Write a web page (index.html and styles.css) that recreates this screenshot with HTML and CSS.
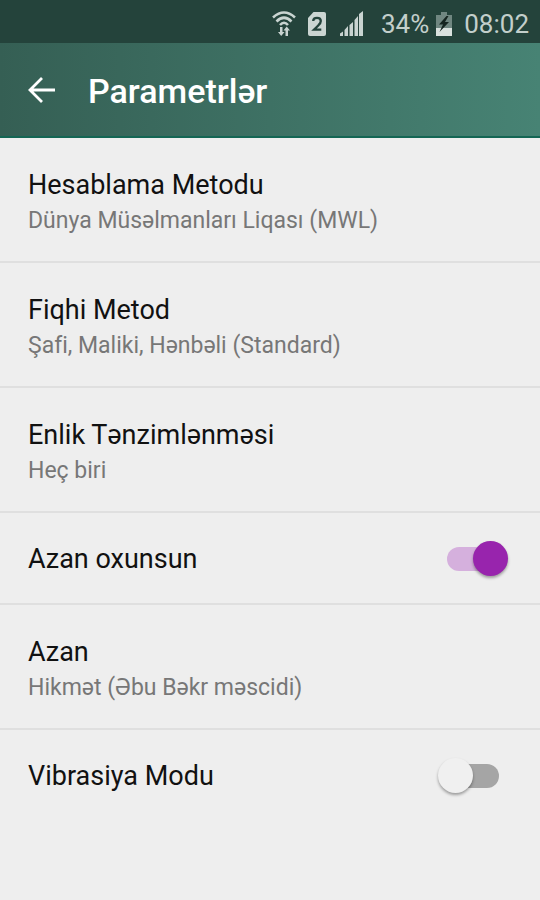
FILE: index.html
```html
<!DOCTYPE html>
<html lang="az">
<head>
<meta charset="utf-8">
<meta name="viewport" content="width=device-width, initial-scale=1">
<title>Parametrlər</title>
<link rel="stylesheet" href="styles.css">
</head>
<body>
<div class="status">
  <svg class="wifi" width="24" height="28" viewBox="0 0 24 28" aria-hidden="true">
    <g fill="none" stroke="#c9d4d1" stroke-width="2.600">
      <path d="M1 7.500Q12-2.500 23 7.500"/>
      <path d="M4.500 11.500Q12 4 19.500 11.500"/>
      <path d="M8 15Q12 10.500 16 15"/>
    </g>
    <path d="M8 17h2.500v5h2L9.200 26 6 22h2zM13.500 26v-5.500h-2l3.200-4 3.300 4h-2V26z" fill="#c9d4d1"/>
  </svg>
  <svg class="sim" width="18" height="24" viewBox="0 0 18 24" aria-hidden="true">
    <path d="M5.500 0H16a2 2 0 0 1 2 2v20a2 2 0 0 1-2 2H2a2 2 0 0 1-2-2V6z" fill="#cbd5d2"/>
    <path d="M5.200 9Q5.200 5.800 9 5.800T12.800 9Q12.800 11 10.500 13.200L6 17.700H13.300" fill="none" stroke="#24433b" stroke-width="2.300"/>
  </svg>
  <svg class="signal" width="23" height="25" viewBox="0 0 23 25" aria-hidden="true">
    <path d="M0 22.500l3-2V25H0zM4.500 19l3.500-4v10H4.500zM9.500 14l3.500-3v14H9.500zM14.500 9L18 5v20h-3.500zM19 3l4-3v25h-4z" fill="#c9d4d1"/>
  </svg>
  <span class="percent">34%</span>
  <svg class="battery" width="16" height="24" viewBox="0 0 16 24" aria-hidden="true">
    <path d="M0 3h5V0h6v3h5v21H0z" fill="#708781"/>
    <path d="M0 16h16v8H0z" fill="#d9e1de"/>
    <path d="M10.500 4L3 12.500h4L3.500 20 13 10H9l3.500-6z" fill="#152520"/>
  </svg>
  <time class="clock">08:02</time>
</div>
<header class="toolbar">
  <button class="back" type="button" aria-label="Geri">
    <svg width="28" height="28" viewBox="0 0 28 28" aria-hidden="true">
      <path d="M27 13H2M14 1L2 13l12 12" fill="none" stroke="#fff" stroke-width="2.800"/>
    </svg>
  </button>
  <h1 class="heading">Parametrlər</h1>
</header>
<main class="settings">
  <button class="row" type="button">
    <span class="title">Hesablama Metodu</span>
    <span class="summary">Dünya Müsəlmanları Liqası (MWL)</span>
  </button>
  <button class="row" type="button">
    <span class="title">Fiqhi Metod</span>
    <span class="summary">Şafi, Maliki, Hənbəli (Standard)</span>
  </button>
  <button class="row" type="button">
    <span class="title">Enlik Tənzimlənməsi</span>
    <span class="summary">Heç biri</span>
  </button>
  <label class="row toggle">
    <span class="title">Azan oxunsun</span>
    <input class="switch" type="checkbox" checked>
  </label>
  <button class="row" type="button">
    <span class="title">Azan</span>
    <span class="summary">Hikmət (Əbu Bəkr məscidi)</span>
  </button>
  <label class="row toggle">
    <span class="title">Vibrasiya Modu</span>
    <input class="switch" type="checkbox">
  </label>
</main>
</body>
</html>
```
FILE: styles.css
```css
* {
  box-sizing: border-box;
}

body {
  margin: 0;
  min-height: 100vh;
  background: #eee;
  color: #111;
  font-family: Roboto, "Noto Sans", sans-serif;
}

.status {
  display: flex;
  align-items: center;
  justify-content: flex-end;
  height: 43px;
  padding: 4px 11px 0 0;
  background: #24433b;
  color: #c3cfcb;
  font-size: 26px;
  line-height: 32px;
}

.sim {
  margin-left: 12px;
}

.signal {
  margin-left: 14px;
}

.percent {
  margin-left: 18px;
}

.battery {
  margin: 0 12px 0 7px;
}

.toolbar {
  display: flex;
  align-items: center;
  gap: 32px;
  height: 95px;
  padding: 2px 28px 0;
  border-bottom: 2px solid #146654;
  background: linear-gradient(90deg, #355f54, #478374);
}

.back {
  display: flex;
  padding: 0;
  border: 0;
  background: none;
}

.heading {
  margin: 0;
  color: #fff;
  font-size: 34px;
  font-weight: 500;
  line-height: 44px;
}

.row {
  display: flex;
  flex-direction: column;
  width: 100%;
  padding: 29px 28px 22px;
  border: 0;
  border-bottom: 2px solid #dfdfdf;
  background: none;
  color: inherit;
  font-family: inherit;
  text-align: left;
}

.row:last-child {
  border-bottom: 0;
}

.title,
.summary {
  line-height: 36px;
}

.title {
  font-size: 27px;
}

.summary {
  color: #777;
  font-size: 23px;
}

.toggle {
  flex-direction: row;
  align-items: center;
  justify-content: space-between;
  padding: 28px 32px 26px 28px;
}

.switch {
  position: relative;
  flex: none;
  appearance: none;
  width: 70px;
  height: 36px;
  margin: 0;
}

.switch::before,
.switch::after {
  content: "";
  position: absolute;
}

.switch::before {
  top: 6px;
  left: 9px;
  width: 52px;
  height: 24px;
  border-radius: 12px;
  background: #a5a5a5;
}

.switch::after {
  top: 0;
  left: 0;
  width: 35px;
  height: 35px;
  border-radius: 50%;
  background: #f0f0f0;
  box-shadow: 0 2px 3px rgba(0, 0, 0, 0.35);
}

.switch:checked::before {
  background: #d5b0dd;
}

.switch:checked::after {
  left: 35px;
  background: #9824ad;
}
```
